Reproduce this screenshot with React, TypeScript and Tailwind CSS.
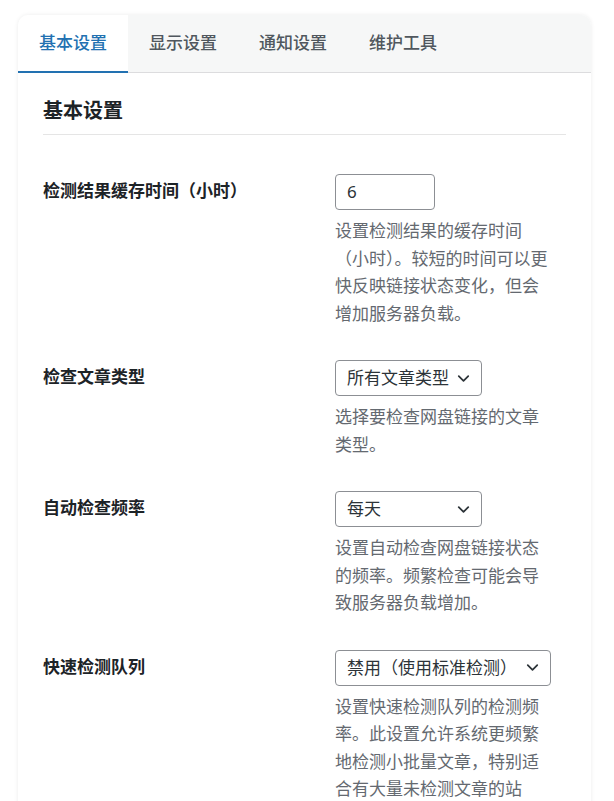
import { ChevronDown } from 'lucide-react';

const tabs = ['基本设置', '显示设置', '通知设置', '维护工具'];

type Row = {
  label: string;
  kind: 'input' | 'select';
  value: string;
  width: string;
  desc: string;
};

const rows: Row[] = [
  {
    label: '检测结果缓存时间（小时）',
    kind: 'input',
    value: '6',
    width: 'w-[100px]',
    desc: '设置检测结果的缓存时间（小时）。较短的时间可以更快反映链接状态变化，但会增加服务器负载。',
  },
  {
    label: '检查文章类型',
    kind: 'select',
    value: '所有文章类型',
    width: 'w-[147px]',
    desc: '选择要检查网盘链接的文章类型。',
  },
  {
    label: '自动检查频率',
    kind: 'select',
    value: '每天',
    width: 'w-[147px]',
    desc: '设置自动检查网盘链接状态的频率。频繁检查可能会导致服务器负载增加。',
  },
  {
    label: '快速检测队列',
    kind: 'select',
    value: '禁用（使用标准检测）',
    width: 'w-[216px]',
    desc: '设置快速检测队列的检测频率。此设置允许系统更频繁地检测小批量文章，特别适合有大量未检测文章的站点。',
  },
];

const App = () => {
  return (
    <div className="min-h-screen bg-white pt-[15px] pl-[18px] font-['Noto_Sans','Noto_Sans_CJK_SC',sans-serif]">
      <div className="w-[573px] rounded-t-[10px] bg-white shadow-[0_0_4px_rgba(0,0,0,0.08)] overflow-hidden">
        {/* tabs */}
        <div className="flex h-[58px] border-b border-[#dcdcde] bg-[#f6f7f7]">
          {tabs.map((t, i) => (
            <div
              key={t}
              className={
                i === 0
                  ? 'flex h-[58px] items-center border-b-2 border-[#2271b1] bg-white px-[21px] text-[17px] font-medium text-[#2271b1]'
                  : 'flex h-[58px] items-center border-b-2 border-transparent px-[21px] text-[17px] font-medium text-[#50575e]'
              }
            >
              {t}
            </div>
          ))}
        </div>

        {/* content */}
        <div className="px-[25px] pt-[24px] pb-[40px]">
          <h2 className="border-b border-[#e5e5e5] pb-[9px] text-[20px] font-bold leading-[28px] text-[#1d2327]">
            基本设置
          </h2>

          <div className="mt-[39px] flex flex-col gap-[33px]">
            {rows.map((r) => (
              <div key={r.label} className="flex">
                <div className="flex h-[34px] w-[292px] shrink-0 items-center text-[17px] font-bold text-[#1d2327]">
                  {r.label}
                </div>
                <div className="flex flex-col">
                  {r.kind === 'input' ? (
                    <div
                      className={`${r.width} flex h-[36px] items-center rounded-[4px] border border-[#8c8f94] bg-white px-[11px] text-[17px] text-[#2c3338]`}
                    >
                      {r.value}
                    </div>
                  ) : (
                    <div
                      className={`${r.width} flex h-[36px] items-center justify-between rounded-[4px] border border-[#8c8f94] bg-white pl-[11px] pr-[8px] text-[17px] text-[#2c3338]`}
                    >
                      <span className="whitespace-nowrap">{r.value}</span>
                      <ChevronDown className="h-[19px] w-[19px] shrink-0 text-[#2c3338]" strokeWidth={2.2} />
                    </div>
                  )}
                  <p className="mt-[7px] w-[218px] text-[17px] leading-[27.5px] text-[#646970]">{r.desc}</p>
                </div>
              </div>
            ))}
          </div>
        </div>
      </div>
    </div>
  );
};

export default App;
